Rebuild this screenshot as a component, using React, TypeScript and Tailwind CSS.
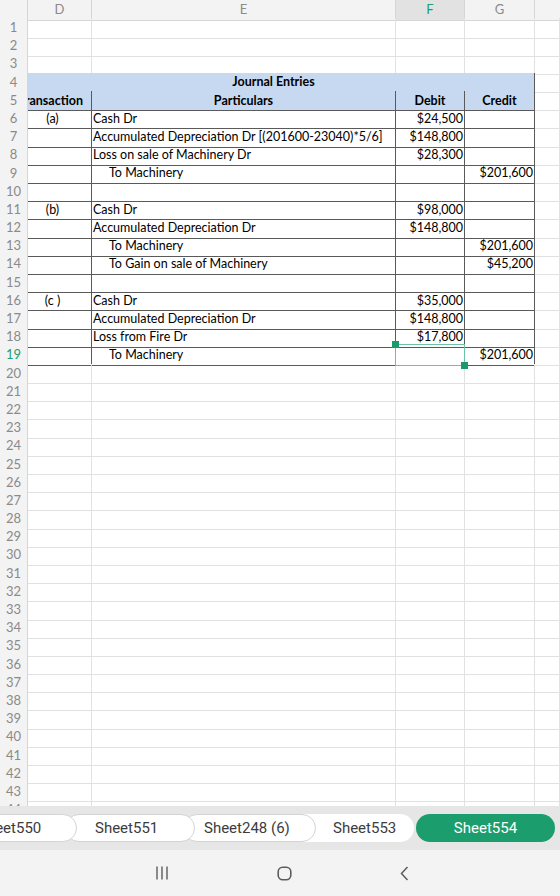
import React from 'react';

type Kind = 'plain' | 'top' | 'title' | 'head' | 'entry';

interface SheetRow {
  n: number;
  kind: Kind;
  tag?: string;
  text?: string;
  indent?: boolean;
  debit?: string;
  credit?: string;
}

// journal lines, keyed by spreadsheet row number
const journal: Record<number, Omit<SheetRow, 'n' | 'kind'>> = {
  6: { tag: '(a)', text: 'Cash Dr', debit: '$24,500' },
  7: { text: 'Accumulated Depreciation Dr [(201600-23040)*5/6]', debit: '$148,800' },
  8: { text: 'Loss on sale of Machinery Dr', debit: '$28,300' },
  9: { text: 'To Machinery', indent: true, credit: '$201,600' },
  10: {},
  11: { tag: '(b)', text: 'Cash Dr', debit: '$98,000' },
  12: { text: 'Accumulated Depreciation Dr', debit: '$148,800' },
  13: { text: 'To Machinery', indent: true, credit: '$201,600' },
  14: { text: 'To Gain on sale of Machinery', indent: true, credit: '$45,200' },
  15: {},
  16: { tag: '(c )', text: 'Cash Dr', debit: '$35,000' },
  17: { text: 'Accumulated Depreciation Dr', debit: '$148,800' },
  18: { text: 'Loss from Fire Dr', debit: '$17,800' },
  19: { text: 'To Machinery', indent: true, credit: '$201,600' },
};

const rows: SheetRow[] = Array.from({ length: 44 }, (_, i) => {
  const n = i + 1;
  if (n === 3) return { n, kind: 'top' };
  if (n === 4) return { n, kind: 'title' };
  if (n === 5) return { n, kind: 'head' };
  if (journal[n]) return { n, kind: 'entry', ...journal[n] };
  return { n, kind: 'plain' };
});

const SELECTED_ROW = 19;

const rowGrid = 'grid h-[18.19px] shrink-0 grid-cols-[28px_64px_304px_69px_70px_1fr]';
const gridLine = 'border-r border-b border-[#e1e1e1]';
const tableLine = 'border-r border-b border-[#5a5a5a]';
const aboveTable = 'border-r border-b border-[#e1e1e1] border-b-[#5a5a5a]';

function RowNumber({ n }: { n: number }) {
  return (
    <div
      className={
        n === SELECTED_ROW
          ? 'flex items-center justify-center border-r border-b border-[#d6d6d6] bg-[#f3f3f3] text-[13px] text-[#1e9e6e]'
          : 'flex items-center justify-center border-r border-b border-[#d6d6d6] bg-[#f3f3f3] text-[13px] text-[#8a8a8a]'
      }
    >
      {n}
    </div>
  );
}

function Row({ row }: { row: SheetRow }) {
  if (row.kind === 'title') {
    return (
      <div className={rowGrid}>
        <RowNumber n={row.n} />
        <div className="col-span-4 flex items-end justify-center border-r border-b border-[#5a5a5a] border-b-[#c6d9f1] bg-[#c6d9f1] pr-[15px] font-bold">
          Journal Entries
        </div>
        <div className={gridLine} />
      </div>
    );
  }

  if (row.kind === 'head') {
    return (
      <div className={rowGrid}>
        <RowNumber n={row.n} />
        <div className="flex items-end justify-end overflow-hidden whitespace-nowrap border-r border-b border-[#5a5a5a] bg-[#c6d9f1] pr-[8px] font-bold">
          Transaction
        </div>
        <div className="flex items-end justify-center border-r border-b border-[#5a5a5a] bg-[#c6d9f1] font-bold">
          Particulars
        </div>
        <div className="flex items-end justify-center border-r border-b border-[#5a5a5a] bg-[#c6d9f1] font-bold">
          Debit
        </div>
        <div className="flex items-end justify-center border-r border-b border-[#5a5a5a] bg-[#c6d9f1] font-bold">
          Credit
        </div>
        <div className={gridLine} />
      </div>
    );
  }

  if (row.kind === 'entry') {
    const selected = row.n === SELECTED_ROW;
    return (
      <div className={rowGrid}>
        <RowNumber n={row.n} />
        <div className={`${tableLine} flex items-end justify-center pr-[14px]`}>{row.tag}</div>
        <div
          className={
            row.indent
              ? `${tableLine} flex items-end overflow-hidden whitespace-nowrap pl-[17px]`
              : `${tableLine} flex items-end overflow-hidden whitespace-nowrap pl-[1px]`
          }
        >
          {row.text}
        </div>
        <div className={`${tableLine} relative flex items-end justify-end pr-[1px]`}>
          {row.debit}
          {selected && (
            <div className="absolute -top-px -left-px -right-px -bottom-px z-10 border border-[#6cc2a2]">
              <span className="absolute -left-[4px] -top-[4px] h-[7px] w-[7px] bg-[#1a9a6a]" />
              <span className="absolute -right-[4px] -bottom-[4px] h-[7px] w-[7px] bg-[#1a9a6a]" />
            </div>
          )}
        </div>
        <div className={`${tableLine} flex items-end justify-end pr-[1px]`}>{row.credit}</div>
        <div className={gridLine} />
      </div>
    );
  }

  const line = row.kind === 'top' ? aboveTable : gridLine;
  return (
    <div className={rowGrid}>
      <RowNumber n={row.n} />
      <div className={line} />
      <div className={line} />
      <div className={line} />
      <div className={line} />
      <div className={gridLine} />
    </div>
  );
}

function ColumnHeaders() {
  return (
    <div className="grid h-[18px] shrink-0 grid-cols-[28px_64px_304px_69px_70px_1fr] text-[13px] text-[#8a8a8a]">
      <div className="border-r border-b border-[#d6d6d6] bg-[#f3f3f3]" />
      <div className="flex items-center justify-center border-r border-b border-[#d6d6d6] bg-[#f3f3f3]">D</div>
      <div className="flex items-center justify-center border-r border-b border-[#d6d6d6] bg-[#f3f3f3]">E</div>
      <div className="flex items-center justify-center border-r border-b border-[#d6d6d6] bg-[#e2e2e2] text-[#1e9e6e]">F</div>
      <div className="flex items-center justify-center border-r border-b border-[#d6d6d6] bg-[#f3f3f3]">G</div>
      <div className="border-b border-[#d6d6d6] bg-[#f3f3f3]" />
    </div>
  );
}

function SheetTabs() {
  return (
    <div className="flex h-[44px] shrink-0 items-center overflow-hidden bg-[#e6e6e6] font-[Roboto,sans-serif] text-[15px] text-[#3c3c3c]">
      <div className="relative z-40 -ml-[60px] flex h-[28px] w-[137px] shrink-0 items-center rounded-full border border-[#d4d4d4] bg-white pl-[37px]">
        Sheet550
      </div>
      <div className="relative z-30 -ml-[12px] flex h-[28px] w-[130px] shrink-0 items-center rounded-full border border-[#d4d4d4] bg-white pl-[29px]">
        Sheet551
      </div>
      <div className="relative z-20 -ml-[12px] flex h-[28px] w-[133px] shrink-0 items-center rounded-full border border-[#d4d4d4] bg-white pl-[20px]">
        Sheet248 (6)
      </div>
      <div className="relative z-10 -ml-[12px] flex h-[28px] w-[110px] shrink-0 items-center rounded-r-full bg-white pl-[29px]">
        Sheet553
      </div>
      <div className="ml-[2px] flex h-[28px] w-[139px] shrink-0 items-center justify-center rounded-full bg-[#1b9d6d] text-white">
        Sheet554
      </div>
    </div>
  );
}

function NavBar() {
  return (
    <div className="flex h-[46px] shrink-0 items-center justify-center gap-[108px] bg-[#f3f3f3] pl-[4px] text-[#5c5c5c]">
      <svg width="14" height="14" viewBox="0 0 14 14" fill="none" stroke="currentColor" strokeWidth="1.4">
        <path d="M2 0.5v13M7 0.5v13M12 0.5v13" />
      </svg>
      <svg width="15" height="15" viewBox="0 0 15 15" fill="none" stroke="currentColor" strokeWidth="1.6">
        <rect x="1.2" y="1.2" width="12.6" height="12.6" rx="4.5" />
      </svg>
      <svg width="9" height="15" viewBox="0 0 9 15" fill="none" stroke="currentColor" strokeWidth="1.5">
        <path d="M7.5 1L1.5 7.5L7.5 14" />
      </svg>
    </div>
  );
}

export default function App() {
  return (
    <div className="flex h-[896px] w-[560px] flex-col overflow-hidden bg-white font-[Lato,sans-serif] text-[12.5px] leading-normal text-black">
      <div className="flex h-[806px] shrink-0 flex-col overflow-hidden">
        <ColumnHeaders />
        {rows.map((row) => (
          <Row key={row.n} row={row} />
        ))}
      </div>
      <SheetTabs />
      <NavBar />
    </div>
  );
}
